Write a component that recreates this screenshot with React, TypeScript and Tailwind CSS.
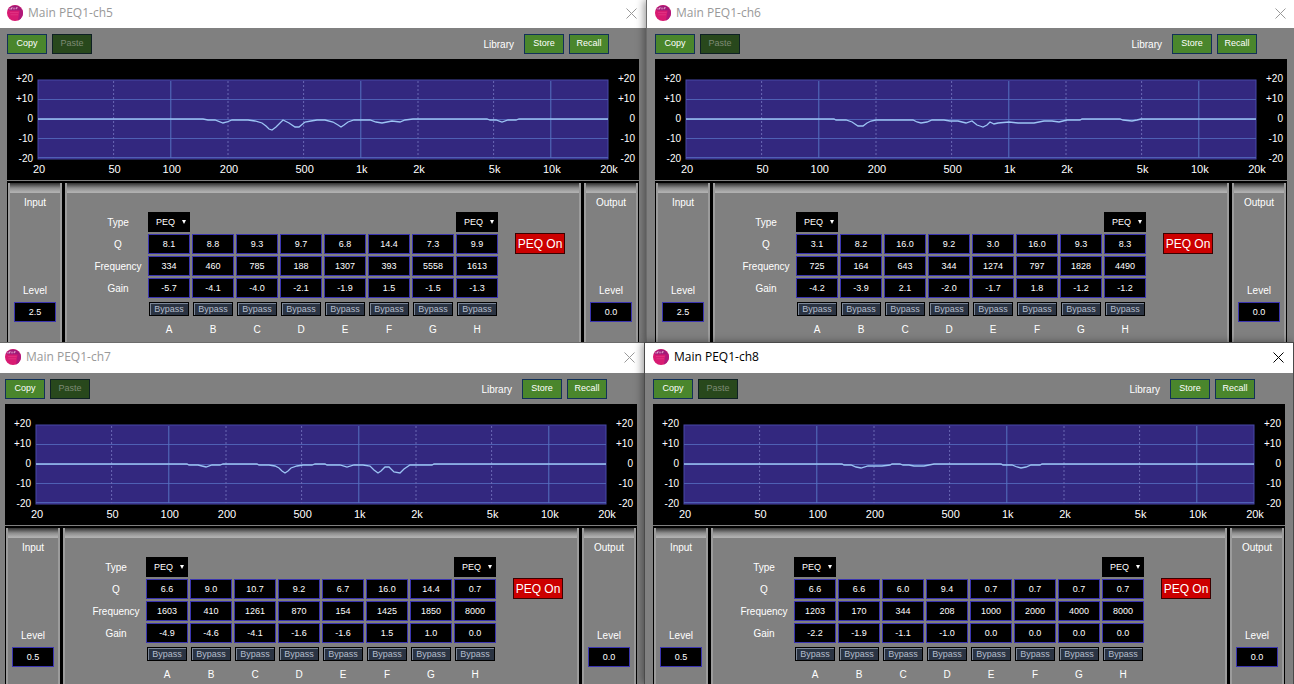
import React from "react";

type Band = { q: string; freq: string; gain: string };

type Channel = {
  id: string;
  title: string;
  active: boolean;
  inputLevel: string;
  outputLevel: string;
  bands: Band[];
  curve: string;
  frame: string;
  header: string;
  body: string;
};

const LETTERS = ["A", "B", "C", "D", "E", "F", "G", "H"];

function makeBands(q: string, freq: string, gain: string): Band[] {
  const qs = q.split(" ");
  const fs = freq.split(" ");
  const gs = gain.split(" ");
  return qs.map((value, i) => ({ q: value, freq: fs[i], gain: gs[i] }));
}

const CHANNELS: Channel[] = [
  {
    id: "ch5",
    title: "Main PEQ1-ch5",
    active: false,
    inputLevel: "2.5",
    outputLevel: "0.0",
    bands: makeBands(
      "8.1 8.8 9.3 9.7 6.8 14.4 7.3 9.9",
      "334 460 785 188 1307 393 5558 1613",
      "-5.7 -4.1 -4.0 -2.1 -1.9 1.5 -1.5 -1.3"
    ),
    curve:
      "0,0 165,0 170,1 177,1 185,4 189,3 194,1 210,1 217,2 224,4 228,7 231,10 234,11 238,8 245,1 251,4 257,8 261,8 267,3 273,2 279,1 287,1 295,3 300,6 303,8 306,6 310,3 316,1 332,1 338,3 344,4 349,3 354,2 362,3 367,1 375,0 449,0 452,1 458,1 464,3 470,1 478,1 481,0 570,0",
    frame: "",
    header: "h-7 pb-0.5 pl-[7px] pr-[9px]",
    body: "px-[7px]",
  },
  {
    id: "ch6",
    title: "Main PEQ1-ch6",
    active: false,
    inputLevel: "2.5",
    outputLevel: "0.0",
    bands: makeBands(
      "3.1 8.2 16.0 9.2 3.0 16.0 9.3 8.3",
      "725 164 643 344 1274 797 1828 4490",
      "-4.2 -3.9 2.1 -2.0 -1.7 1.8 -1.2 -1.2"
    ),
    curve:
      "0,0 148,0 150,1 160,1 166,3 172,7 177,7 181,4 185,2 190,1 227,1 231,3 235,4 241,3 246,1 258,1 264,2 272,2 280,4 286,2 291,6 294,7 297,8 301,6 304,3 308,5 312,4 323,3 332,4 348,4 358,2 366,2 373,3 381,1 394,1 396,0 434,0 437,1 446,2 451,1 455,0 570,0",
    frame: "border-l border-[#6c6c6c] shadow-[-2px_0_8px_rgba(0,0,0,0.4)]",
    header: "h-7 pb-0.5 pl-2 pr-2",
    body: "pl-2 pr-[7px]",
  },
  {
    id: "ch7",
    title: "Main PEQ1-ch7",
    active: false,
    inputLevel: "0.5",
    outputLevel: "0.0",
    bands: makeBands(
      "6.6 9.0 10.7 9.2 6.7 16.0 14.4 0.7",
      "1603 410 1261 870 154 1425 1850 8000",
      "-4.9 -4.6 -4.1 -1.6 -1.6 1.5 1.0 0.0"
    ),
    curve:
      "0,0 151,0 153,1 162,1 170,3 176,1 184,1 187,0 221,0 223,1 233,1 239,2 243,4 246,7 249,9 252,7 255,4 261,2 267,1 276,1 279,0 289,0 291,1 304,1 311,3 318,1 327,1 334,2 338,6 342,9 345,7 349,3 353,3 358,8 364,9 368,5 374,1 396,1 398,0 570,0",
    frame: "border-t border-[#6c6c6c]",
    header: "h-[30px] pb-0.5 pl-[5px] pr-[9px]",
    body: "pl-[5px] pr-[7px]",
  },
  {
    id: "ch8",
    title: "Main PEQ1-ch8",
    active: true,
    inputLevel: "0.5",
    outputLevel: "0.0",
    bands: makeBands(
      "6.6 6.6 6.0 9.4 0.7 0.7 0.7 0.7",
      "1203 170 344 208 1000 2000 4000 8000",
      "-2.2 -1.9 -1.1 -1.0 0.0 0.0 0.0 0.0"
    ),
    curve:
      "0,0 158,0 160,1 167,1 172,3 177,4 184,2 198,2 206,1 208,0 216,0 219,1 225,1 230,2 240,2 245,1 250,0 317,0 319,1 328,1 333,3 337,4 342,3 347,1 356,1 358,0 570,0",
    frame: "border-x border-t border-[#4a4a4a] shadow-[-2px_0_8px_rgba(0,0,0,0.4)]",
    header: "h-[30px] pb-0.5 pl-2 pr-[9px]",
    body: "px-2",
  },
];

const TICKS = [
  { hz: 20, label: "20", solid: false },
  { hz: 50, label: "50", solid: false },
  { hz: 100, label: "100", solid: true },
  { hz: 200, label: "200", solid: false },
  { hz: 500, label: "500", solid: false },
  { hz: 1000, label: "1k", solid: true },
  { hz: 2000, label: "2k", solid: false },
  { hz: 5000, label: "5k", solid: false },
  { hz: 10000, label: "10k", solid: true },
  { hz: 20000, label: "20k", solid: false },
];

const tickX = (hz: number) => `${(Math.log10(hz / 20) / 3) * 100}%`;

function AppIcon() {
  return (
    <svg viewBox="0 0 16 16" className="size-4 shrink-0" aria-hidden="true">
      <circle cx="8" cy="8" r="8" fill="#d81b72" />
      <path d="M1.2 4.2A8 8 0 0 1 14.8 4.2L13.2 5.6H2.4Z" fill="#a01a78" />
      <path d="M12.6 5.2l2.6-.6A8 8 0 0 1 11 15.4Z" fill="#b0187a" />
      <path d="M3 4.6V3.2M4.6 4.4V2.8h1M7 4.4V2.6M9.2 4.2V2.8h1.4" stroke="#f2c4e0" strokeWidth=".9" fill="none" />
      <path d="M3 7.6h8.6M3.4 9.8h7.6" stroke="#e23a88" strokeWidth=".8" fill="none" />
    </svg>
  );
}

function ScaleLabels() {
  return (
    <div className="flex h-[98px] w-[26px] shrink-0 flex-col justify-between text-right text-[10px] leading-[18px]">
      <span>+20</span>
      <span>+10</span>
      <span>0</span>
      <span>-10</span>
      <span>-20</span>
    </div>
  );
}

function Chart({ curve }: { curve: string }) {
  return (
    <div className="flex h-[121px] bg-black pt-[11px] pr-1 text-white">
      <ScaleLabels />
      <svg
        className="mr-px ml-[5px] h-[110px] min-w-0 flex-1 overflow-visible"
        role="img"
        aria-label="Frequency response"
      >
        <rect x="0" y="10" width="100%" height="79" fill="#33287f" stroke="#4848a8" />
        {[29.5, 49.5, 68.5, 87.5].map((y) => (
          <line key={y} x1="0" x2="100%" y1={y} y2={y} stroke="#4f60b4" />
        ))}
        {TICKS.slice(1, 9).map((t) => (
          <line
            key={t.hz}
            x1={tickX(t.hz)}
            x2={tickX(t.hz)}
            y1="11"
            y2="88"
            stroke={t.solid ? "#5672c0" : "#6a68b4"}
            strokeDasharray={t.solid ? undefined : "2 2"}
          />
        ))}
        <svg x="0" y="49" width="100%" height="20" viewBox="0 0 570 20" preserveAspectRatio="none" overflow="visible">
          <polyline points={curve} fill="none" stroke="#9cc4f4" strokeWidth="1.3" vectorEffect="non-scaling-stroke" />
        </svg>
        {TICKS.map((t) => (
          <text key={t.hz} x={tickX(t.hz)} y="103" dx="1" textAnchor="middle" fill="white" className="text-[11px]">
            {t.label}
          </text>
        ))}
      </svg>
      <ScaleLabels />
    </div>
  );
}

const greenButton =
  "h-5 w-10 border border-[#123058] bg-[#4a862c] pb-0.5 text-[9px] leading-3 text-white";

const panel =
  "border-x-2 border-[#9c9c9c] bg-[linear-gradient(#303030_0px,#8c8c8c_5px,#b0b0b0_9px,#b0b0b0_10px,#808080_10px)]";

const cell =
  "block h-5 w-[42px] border border-[#3a34b0] bg-black p-0 text-center text-[9px] text-white outline-none";

function LevelPanel({ id, name, value }: { id: string; name: string; value: string }) {
  return (
    <div className={`${panel} flex w-[54px] shrink-0 flex-col items-center text-[10px] leading-3 text-white`}>
      <h2 className="mt-[14px]">{name}</h2>
      <label htmlFor={id} className="mt-[76px]">
        Level
      </label>
      <input id={id} defaultValue={value} className={`${cell} mt-[5px]`} />
    </div>
  );
}

function TypeSelect({ label }: { label: string }) {
  return (
    <div className="relative">
      <select
        aria-label={label}
        className="block h-5 w-[42px] appearance-none bg-black pl-2 text-[9px] text-white outline-none"
      >
        <option>PEQ</option>
      </select>
      <svg viewBox="0 0 4 4" className="pointer-events-none absolute top-2 right-1 size-1" aria-hidden="true">
        <path d="M0 0H4L2 4Z" fill="white" />
      </svg>
    </div>
  );
}

function BandTable({ bands }: { bands: Band[] }) {
  const rows = [
    { name: "Q", key: "q" as const },
    { name: "Frequency", key: "freq" as const },
    { name: "Gain", key: "gain" as const },
  ];
  return (
    <table className="mt-[27px] ml-[21px] border-separate border-spacing-x-[2px] border-spacing-y-[2px] text-[10px] leading-3 text-white">
      <tbody>
        <tr>
          <th scope="row" className="w-14 p-0 pt-0.5 font-normal">
            Type
          </th>
          {bands.map((_, i) => (
            <td key={i} className="h-5 p-0">
              {(i === 0 || i === 7) && <TypeSelect label={`Type ${LETTERS[i]}`} />}
            </td>
          ))}
        </tr>
        {rows.map((row) => (
          <tr key={row.key}>
            <th scope="row" className="p-0 pt-0.5 font-normal">
              {row.name}
            </th>
            {bands.map((band, i) => (
              <td key={i} className="p-0">
                <input aria-label={`${row.name} ${LETTERS[i]}`} defaultValue={band[row.key]} className={cell} />
              </td>
            ))}
          </tr>
        ))}
        <tr>
          <td className="p-0" />
          {bands.map((_, i) => (
            <td key={i} className="h-[18px] p-0">
              <button
                type="button"
                aria-label={`Bypass ${LETTERS[i]}`}
                className="mx-auto block h-[14px] w-10 border border-black bg-[#2b3443] text-[9px] leading-[11px] text-[#b4bccb] shadow-[inset_1px_1px_0_#7c8798]"
              >
                Bypass
              </button>
            </td>
          ))}
        </tr>
        <tr>
          <td className="p-0" />
          {LETTERS.map((letter) => (
            <td key={letter} className="h-4 p-0 pt-1 text-center">
              {letter}
            </td>
          ))}
        </tr>
      </tbody>
    </table>
  );
}

function PeqWindow({ channel }: { channel: Channel }) {
  return (
    <section className={`flex min-w-0 flex-col bg-[#808080] ${channel.frame}`}>
      <header
        className={`flex shrink-0 items-center bg-white ${channel.header} ${
          channel.active ? "text-black" : "text-[#999999]"
        }`}
      >
        <AppIcon />
        <h1 className="ml-[5px] flex-1 font-['Open_Sans','Noto_Sans',sans-serif] text-xs">{channel.title}</h1>
        <button type="button" aria-label="Close">
          <svg viewBox="0 0 11 11" className="block size-[11px]" fill="none" stroke="currentColor">
            <path d="M.5 .5L10.5 10.5M10.5 .5L.5 10.5" />
          </svg>
        </button>
      </header>
      <div className={`flex flex-1 flex-col ${channel.body}`}>
        <div className="flex h-[31px] shrink-0 items-center pr-[30px]">
          <button type="button" className={greenButton}>
            Copy
          </button>
          <button
            type="button"
            disabled
            className="ml-[5px] h-5 w-10 border border-[#0e2024] bg-[#28481c] pb-0.5 text-[9px] leading-3 text-[#7d8a74]"
          >
            Paste
          </button>
          <span className="mr-[10px] ml-auto pt-0.5 text-[10px] leading-3 text-white">Library</span>
          <button type="button" className={greenButton}>
            Store
          </button>
          <button type="button" className={`${greenButton} ml-[5px]`}>
            Recall
          </button>
        </div>
        <Chart curve={channel.curve} />
        <div className="flex flex-1 gap-[3px] border-t border-[#808080] bg-black px-px pt-0.5">
          <LevelPanel id={`${channel.id}-input`} name="Input" value={channel.inputLevel} />
          <div className={`${panel} flex min-w-0 flex-1 items-start`}>
            <BandTable bands={channel.bands} />
            <button
              type="button"
              className="mt-[50px] ml-[15px] h-[21px] w-[50px] shrink-0 border border-[#3a0000] bg-[#cc0000] text-xs leading-4 whitespace-nowrap text-white"
            >
              PEQ On
            </button>
          </div>
          <LevelPanel id={`${channel.id}-output`} name="Output" value={channel.outputLevel} />
        </div>
      </div>
    </section>
  );
}

export default function App() {
  const [ch5, ch6, ch7, ch8] = CHANNELS;
  return (
    <main className="grid min-h-screen grid-rows-2 overflow-hidden font-['Liberation_Sans',Arial,sans-serif]">
      <div className="grid grid-cols-[646fr_648fr]">
        <PeqWindow channel={ch5} />
        <PeqWindow channel={ch6} />
      </div>
      <div className="grid grid-cols-[644fr_650fr]">
        <PeqWindow channel={ch7} />
        <PeqWindow channel={ch8} />
      </div>
    </main>
  );
}
